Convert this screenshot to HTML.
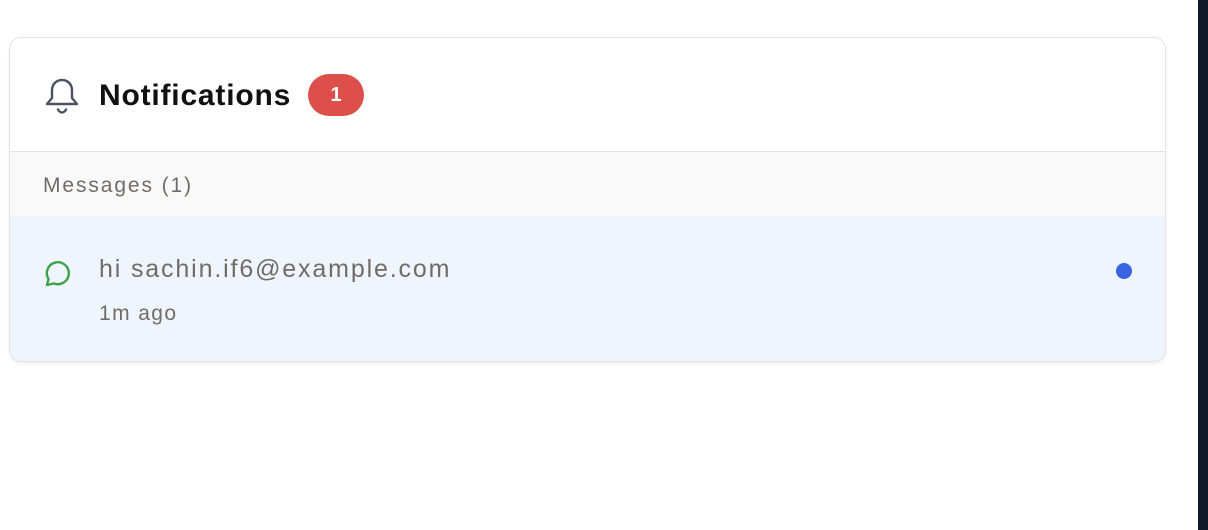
<!DOCTYPE html>
<html><head><style>
body{margin:0;width:1208px;height:530px;background:#fff;position:relative;font-family:"Liberation Sans",sans-serif;overflow:hidden}
.dark{position:absolute;left:1198px;top:0;width:10px;height:530px;background:#111827}
.card{position:absolute;left:9px;top:37px;width:1155px;height:323px;border:1.5px solid #e3e3e3;border-radius:12px;overflow:hidden;box-shadow:0 2px 3px rgba(0,0,0,.06)}
.hdr{height:113px;border-bottom:1.5px solid #e3e3e3;position:relative}
.title{position:absolute;left:89px;top:41px;font-size:30px;font-weight:bold;color:#111;letter-spacing:0.8px}
.badge{position:absolute;left:298px;top:36px;width:56px;height:42px;border-radius:21px;background:#dc4f4a;color:#fff;font-weight:bold;font-size:20px;text-align:center;line-height:42px}
.sec{height:64px;background:#f9f9f9;position:relative}
.sec span{position:absolute;left:33px;top:22px;font-size:21px;color:#716c68;letter-spacing:1.9px}
.row{height:146px;background:#eef5fd;position:relative}
.msg{position:absolute;left:89px;top:39px;font-size:25px;color:#716c68;letter-spacing:1.85px}
.time{position:absolute;left:89px;top:86px;font-size:21px;color:#716c68;letter-spacing:1.4px}
.dot{position:absolute;left:1106px;top:47px;width:16px;height:16px;border-radius:50%;background:#3a63e0}
</style></head><body>
<div class="dark"></div>
<div class="card">
 <div class="hdr">
  <svg style="position:absolute;left:34px;top:39px" width="36" height="38" viewBox="0 0 36 38" fill="none" stroke="#4a5262" stroke-width="2.4" stroke-linecap="round" stroke-linejoin="round">
   <path d="M18 3c-6 0-10 4.5-10 10.5v7.5L3 27h30l-5-6v-7.5C28 7.5 24 3 18 3z"/>
   <path d="M14 32.5c1 2 2.3 3 4 3s3-1 4-3"/>
  </svg>
  <div class="title">Notifications</div>
  <div class="badge">1</div>
 </div>
 <div class="sec"><span>Messages (1)</span></div>
 <div class="row">
  <svg style="position:absolute;left:33px;top:43px" width="30" height="30" viewBox="0 0 30 30" fill="none" stroke="#3fa24a" stroke-width="2.4" stroke-linejoin="round" stroke-linecap="round">
   <path d="M4 26l1.5-6A11 11 0 1 1 11 24.5z"/>
  </svg>
  <div class="msg">hi sachin.if6@example.com</div>
  <div class="time">1m ago</div>
  <div class="dot"></div>
 </div>
</div>
</body></html>
